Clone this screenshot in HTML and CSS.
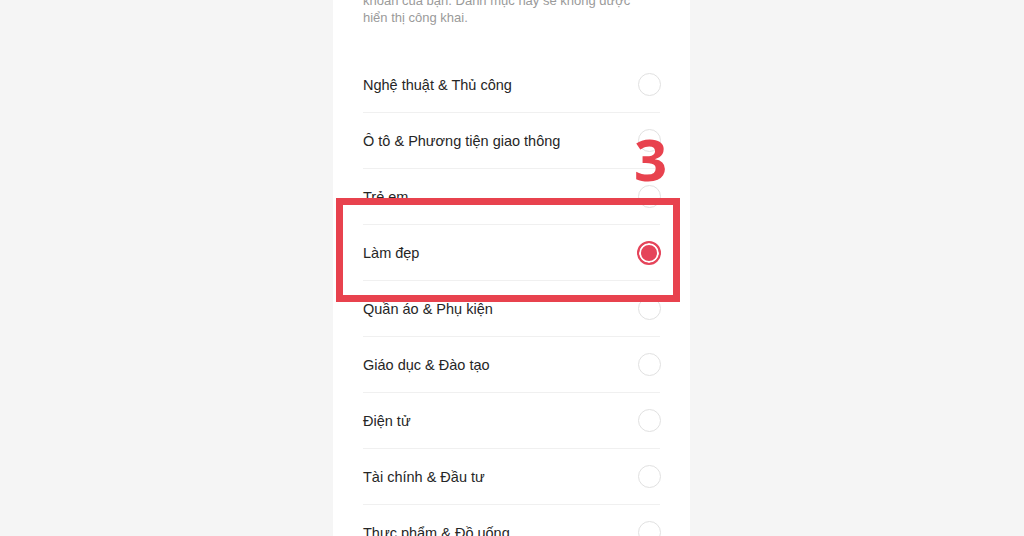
FILE: index.html
```html
<!DOCTYPE html>
<html>
<head>
    <meta charset="utf-8">
    <title>Danh mục</title>
    <link rel="stylesheet" href="styles.css">
</head>
<body>

<div class="sheet">
    <p class="hint">
        khoản của bạn. Danh mục này sẽ không được<br>
        hiển thị công khai.
    </p>

    <ul class="category_list">
        <li class="category_row"><span>Nghệ thuật &amp; Thủ công</span><i class="radio"></i></li>
        <li class="category_row"><span>Ô tô &amp; Phương tiện giao thông</span><i class="radio"></i></li>
        <li class="category_row"><span>Trẻ em</span><i class="radio"></i></li>
        <li class="category_row"><span>Làm đẹp</span><i class="radio checked"></i></li>
        <li class="category_row"><span>Quần áo &amp; Phụ kiện</span><i class="radio"></i></li>
        <li class="category_row"><span>Giáo dục &amp; Đào tạo</span><i class="radio"></i></li>
        <li class="category_row"><span>Điện tử</span><i class="radio"></i></li>
        <li class="category_row"><span>Tài chính &amp; Đầu tư</span><i class="radio"></i></li>
        <li class="category_row"><span>Thực phẩm &amp; Đồ uống</span><i class="radio"></i></li>
    </ul>

    <div class="mark_box"></div>
    <div class="step_number">3</div>
</div>

</body>
</html>
```

FILE: styles.css
```css
body, html {
    margin: 0;
    height: 100%;
    overflow: hidden;
    background-color: #f5f5f5;
    font-family: "Liberation Sans", Arial, sans-serif;
}

.sheet {
    position: relative;
    display: flow-root;
    width: 357px;
    height: 100%;
    margin-left: 333px;
    padding: 0 30px;
    box-sizing: border-box;
    background-color: #fff;
}

.hint {
    margin: -8px 0 0 0;
    font-size: 13px;
    line-height: 17px;
    color: #9a9a9a;
}

.category_list {
    list-style: none;
    margin: 31px 0 0 0;
    padding: 0;
}

.category_row {
    display: flex;
    align-items: center;
    justify-content: space-between;
    height: 55px;
    border-bottom: 1px solid #f0f0f0;
    font-size: 14.5px;
    color: #262626;
}

.radio {
    width: 21px;
    height: 21px;
    margin-right: -1px;
    border: 1.5px solid #e1e1e1;
    border-radius: 50%;
}

.radio.checked {
    border: 2px solid #e5445a;
    width: 20px;
    height: 20px;
    background-color: #e5445a;
    box-shadow: inset 0 0 0 2px #fff;
}

.mark_box {
    position: absolute;
    left: 3px;
    top: 198px;
    width: 344px;
    height: 104px;
    box-sizing: border-box;
    border: 7px solid #e8424e;
}

.step_number {
    position: absolute;
    left: 301px;
    top: 130px;
    font-size: 58px;
    font-weight: bold;
    color: #e8424e;
    font-family: "Open Sans", sans-serif;
    line-height: 1;
}
```
